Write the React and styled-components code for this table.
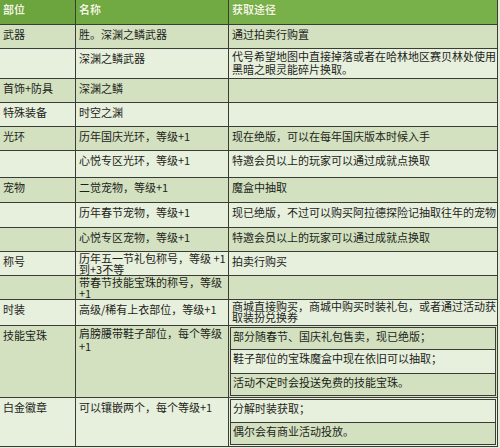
import React from "react";
import styled, { createGlobalStyle } from "styled-components";

const LINE = "#3a3c35";
const DARK = "#d3e1c1";
const LIGHT = "#e7efdd";

const Global = createGlobalStyle`
  html, body { margin: 0; padding: 0; background: #e3ecd8; }
  body { font-family: "Noto Sans CJK SC", "Noto Sans", sans-serif; }
`;

const Table = styled.div`
  display: grid;
  grid-template-columns: 75px 152px 268px;
  grid-template-rows: 24px 23px 29px 23px 23px 23px 26px 24px 24px 23px 23px 23px 25px 71px 48px;
  gap: 1px;
  width: 498px;
  box-sizing: border-box;
  padding: 0 1px 1px 0;
  background: ${LINE};
  font-size: 11px;
  line-height: 14px;
  color: #1d1f1a;
`;

const HeadCell = styled.div`
  background: ${(p) => p.$bg};
  color: #eef6dc;
  font-weight: bold;
  padding: 2px 0 0 3px;
  white-space: nowrap;
  text-shadow: 0 0 1px rgba(60, 100, 30, 0.6);
`;

const Cell = styled.div`
  background: ${(p) => (p.$dark ? DARK : LIGHT)};
  padding: ${(p) => (p.$lh ? "1px" : "2px")} 0 0 3px;
  line-height: ${(p) => p.$lh || 14}px;
  white-space: nowrap;
  overflow: hidden;
`;

const NestCell = styled.div`
  background: ${(p) => (p.$dark ? DARK : LIGHT)};
  padding: 1px;
  display: flex;
`;

const SubGrid = styled.div`
  flex: 1;
  display: grid;
  grid-template-rows: ${(p) => p.$rows};
  gap: 1px;
  border: 1px solid ${LINE};
  background: ${LINE};
`;

const SubCell = styled.div`
  background: ${(p) => (p.$dark ? DARK : LIGHT)};
  padding: 1px 0 0 2px;
  white-space: nowrap;
  overflow: hidden;
`;

const Lines = ({ text }) =>
  text.split("\n").map((t, i) => (
    <React.Fragment key={i}>
      {i > 0 && <br />}
      {t}
    </React.Fragment>
  ));

const rows = [
  { a: "武器", b: "胜。深渊之鳞武器", c: "通过拍卖行购置", dark: true },
  {
    a: "",
    b: "深渊之鳞武器",
    c: "代号希望地图中直接掉落或者在哈林地区赛贝林处使用\n黑暗之眼灵能碎片换取。",
    dark: false,
    lhC: 13,
  },
  { a: "首饰+防具", b: "深渊之鳞", c: "", dark: true },
  { a: "特殊装备", b: "时空之渊", c: "", dark: false },
  { a: "光环", b: "历年国庆光环，等级+1", c: "现在绝版，可以在每年国庆版本时候入手", dark: true },
  { a: "", b: "心悦专区光环，等级+1", c: "特邀会员以上的玩家可以通过成就点换取", dark: false },
  { a: "宠物", b: "二觉宠物，等级+1", c: "魔盒中抽取", dark: true },
  {
    a: "",
    b: "历年春节宠物，等级+1",
    c: "现已绝版，不过可以购买阿拉德探险记抽取往年的宠物",
    dark: false,
  },
  { a: "", b: "心悦专区宠物，等级+1", c: "特邀会员以上的玩家可以通过成就点换取", dark: true },
  { a: "称号", b: "历年五一节礼包称号，等级 +1\n到+3不等", c: "拍卖行购买", dark: false, lhB: 11 },
  { a: "", b: "带春节技能宝珠的称号，等级\n+1", c: "", dark: true, lhB: 11 },
  {
    a: "时装",
    b: "高级/稀有上衣部位，等级+1",
    c: "商城直接购买，商城中购买时装礼包，或者通过活动获\n取装扮兑换券",
    dark: false,
    lhC: 11,
  },
  {
    a: "技能宝珠",
    b: "肩膀腰带鞋子部位，每个等级\n+1",
    lhB: 13,
    sub: ["部分随春节、国庆礼包售卖，现已绝版；", "鞋子部位的宝珠魔盒中现在依旧可以抽取；", "活动不定时会投送免费的技能宝珠。"],
    subRows: "21px 23px 21px",
    subDark: [true, false, true],
    dark: true,
  },
  {
    a: "白金徽章",
    b: "可以镶嵌两个，每个等级+1",
    sub: ["分解时装获取；", "偶尔会有商业活动投放。"],
    subRows: "22px 21px",
    subDark: [false, true],
    dark: false,
  },
];

export default function App() {
  return (
    <>
      <Global />
      <Table>
        <HeadCell $bg="#6ca53e">部位</HeadCell>
        <HeadCell $bg="#71a943">名称</HeadCell>
        <HeadCell $bg="#78b049">获取途径</HeadCell>
        {rows.map((r, i) => (
          <React.Fragment key={i}>
            <Cell $dark={r.dark}>{r.a}</Cell>
            <Cell $dark={r.dark} $lh={r.lhB}>
              <Lines text={r.b} />
            </Cell>
            {r.sub ? (
              <NestCell $dark={r.dark}>
                <SubGrid $rows={r.subRows}>
                  {r.sub.map((s, j) => (
                    <SubCell key={j} $dark={r.subDark[j]}>
                      {s}
                    </SubCell>
                  ))}
                </SubGrid>
              </NestCell>
            ) : (
              <Cell $dark={r.dark} $lh={r.lhC}>
                <Lines text={r.c} />
              </Cell>
            )}
          </React.Fragment>
        ))}
      </Table>
    </>
  );
}
